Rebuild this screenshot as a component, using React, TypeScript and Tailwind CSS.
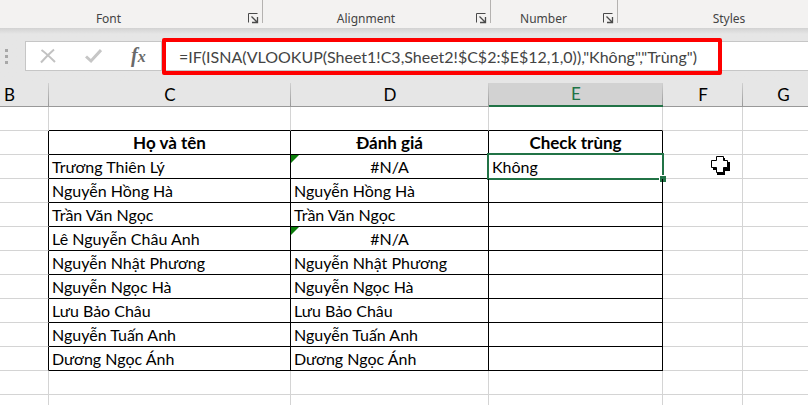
import React from "react";
import { clsx } from "clsx";

interface RibbonGroupProps {
  label: string;
  className: string;
  launcher?: boolean;
}

const RibbonGroup: React.FC<RibbonGroupProps> = ({ label, className, launcher = true }) => (
  <div className={clsx("flex h-7 shrink-0 items-start", className)}>
    <span className="flex-1 pt-[9px] text-center text-xs leading-5 text-[#444444]">{label}</span>
    {launcher && (
      <>
        <button type="button" aria-label={`${label} settings`} className="w-[21px] pt-[13px] pl-[7px]">
          <svg width="11" height="11" viewBox="0 0 11 11" fill="none" stroke="#4a4a4a">
            <path d="M0.5 9.500V0.5H9.5" />
            <path d="M3.5 3.5L9 9M9.5 4V9.5H4" strokeWidth="1.3" />
          </svg>
        </button>
        <span className="h-[23px] w-px bg-[#b4b2b0]" />
      </>
    )}
  </div>
);

const Ribbon = () => (
  <div className="flex h-7 overflow-hidden bg-[#f3f2f1] font-['Noto_Sans',sans-serif]">
    <RibbonGroup label="Font" className="-ml-6 w-[287px]" />
    <RibbonGroup label="Alignment" className="w-[228px]" />
    <RibbonGroup label="Number" className="w-[127px]" />
    <RibbonGroup label="Styles" className="w-[222px]" launcher={false} />
  </div>
);

const FormulaBar = () => (
  <div className="flex h-[55px] items-start bg-linear-to-b from-[#d2d2d2] to-[#e6e6e6] to-[6px] pt-[13px]">
    <div className="flex h-[30px] w-[25px] flex-col justify-center gap-[3px] pl-[5px]">
      <span className="size-[3px] bg-[#a8a8a8]" />
      <span className="size-[3px] bg-[#a8a8a8]" />
      <span className="size-[3px] bg-[#a8a8a8]" />
    </div>
    <div className="flex h-[30px] w-[137px] items-center border border-[#c6c6c6] bg-white pl-[14px]">
      <button type="button" aria-label="Cancel" className="w-[45px]">
        <svg width="16" height="16" viewBox="0 0 16 16" fill="none" stroke="#c2c2c2" strokeWidth="2">
          <path d="M1.5 2C5 4.5 10.5 9.500 15 14" />
          <path d="M14 1.500C10 5 5.500 9.500 1 14.500" />
        </svg>
      </button>
      <button type="button" aria-label="Enter" className="w-[45px]">
        <svg width="17" height="16" viewBox="0 0 17 16" fill="none" stroke="#c6c6c6" strokeWidth="3">
          <path d="M1 8.500L6 13L16 2" />
        </svg>
      </button>
      <button
        type="button"
        aria-label="Insert function"
        className="flex items-baseline pl-px font-['Liberation_Serif',serif] leading-6 font-bold text-[#6a6a6a] italic"
      >
        <span className="text-[20px]">f</span>
        <span className="text-[16px]">x</span>
      </button>
    </div>
    <div className="relative h-[30px] flex-1">
      <input
        type="text"
        aria-label="Formula bar"
        defaultValue={'=IF(ISNA(VLOOKUP(Sheet1!C3,Sheet2!$C$2:$E$12,1,0)),"Không","Trùng")'}
        className="h-full w-full border-y border-[#c6c6c6] bg-white pl-[17px] text-[16px] text-[#444444] outline-none"
      />
      <div className="pointer-events-none absolute -top-[3px] left-0 h-[37px] w-[560px] rounded-xs border-4 border-[#fe0000]" />
    </div>
  </div>
);

const columns = [
  { name: "B", width: "w-[49px]" },
  { name: "C", width: "w-[242px]" },
  { name: "D", width: "w-[198px]" },
  { name: "E", width: "w-[174px]" },
  { name: "F", width: "w-[80px]" },
  { name: "G", width: "w-auto" },
];

const people = [
  { name: "Trương Thiên Lý", rating: "#N/A", check: "Không" },
  { name: "Nguyễn Hồng Hà", rating: "Nguyễn Hồng Hà" },
  { name: "Trần Văn Ngọc", rating: "Trần Văn Ngọc" },
  { name: "Lê Nguyễn Châu Anh", rating: "#N/A" },
  { name: "Nguyễn Nhật Phương", rating: "Nguyễn Nhật Phương" },
  { name: "Nguyễn Ngọc Hà", rating: "Nguyễn Ngọc Hà" },
  { name: "Lưu Bảo Châu", rating: "Lưu Bảo Châu" },
  { name: "Nguyễn Tuấn Anh", rating: "Nguyễn Tuấn Anh" },
  { name: "Dương Ngọc Ánh", rating: "Dương Ngọc Ánh" },
];

const light = "border-r border-b border-[#d4d4d4] last:border-r-0";
const dark = "border-r border-b border-black pt-px pb-0 pr-0 leading-[22px] whitespace-nowrap";
const heading = "pl-0 text-[17px]";
// column B sits left of the bordered range, so only its right edge is black
const edge = "border-r border-b border-r-black border-b-[#d4d4d4]";

const BlankRow = ({ aboveTable = false }: { aboveTable?: boolean }) => (
  <tr className="h-6">
    {columns.map((col) => (
      <td
        key={col.name}
        className={clsx(
          "border-r border-b border-r-[#d4d4d4] last:border-r-0",
          aboveTable && "CDE".includes(col.name) ? "border-b-black" : "border-b-[#d4d4d4]",
        )}
      />
    ))}
  </tr>
);

const ErrorFlag = () => (
  <svg className="absolute top-0 left-0" width="8" height="8" viewBox="0 0 8 8">
    <path d="M0 0H8L0 8Z" fill="#0b7d0b" />
  </svg>
);

const Selection = () => (
  <div className="pointer-events-none absolute -inset-[2px] border-2 border-[#217346]">
    <span className="absolute -right-[4px] -bottom-[4px] size-[7px] border-t border-l border-white bg-[#217346]" />
  </div>
);

const Sheet = () => (
  <table className="w-full table-fixed border-separate border-spacing-0 text-[16px] text-black">
    <thead>
      <tr className="h-6">
        {columns.map((col) => {
          const active = col.name === "E";
          return (
            <th
              key={col.name}
              scope="col"
              className={clsx(
                "relative py-0 text-[17px] font-normal",
                col.width,
                active
                  ? "border-b-2 border-[#217346] bg-[#d2d2d2] leading-[22px] text-[#217346]"
                  : "border-b border-[#999999] bg-[#e6e6e6] leading-[23px]",
                col.name === "B" && "pr-[30px] pl-0",
                col.name === "G" && "pr-0 pl-4",
                col.name !== "B" && col.name !== "G" && "px-0",
              )}
            >
              {col.name}
              {col.name !== "G" && (
                <span className="absolute top-0 right-0 h-full w-px bg-linear-to-b from-[#d0d0d0] to-[#999999]" />
              )}
            </th>
          );
        })}
      </tr>
    </thead>
    <tbody>
      <BlankRow aboveTable />
      <tr className="h-6">
        <td className={edge} />
        <th scope="col" className={clsx(heading, dark)}>Họ và tên</th>
        <th scope="col" className={clsx(heading, dark)}>Đánh giá</th>
        <th scope="col" className={clsx(heading, dark)}>Check trùng</th>
        <td className={light} />
        <td className={light} />
      </tr>
      {people.map((person) => (
        <tr key={person.name} className="h-6">
          <td className={edge} />
          <td className={clsx("pl-[3px]", dark)}>{person.name}</td>
          <td className={clsx("relative", dark, person.rating === "#N/A" ? "pl-0 text-center" : "pl-[3px]")}>
            {person.rating === "#N/A" && <ErrorFlag />}
            {person.rating}
          </td>
          <td className={clsx("relative pl-[3px]", dark)}>
            {person.check}
            {person.check && <Selection />}
          </td>
          <td className={light} />
          <td className={light} />
        </tr>
      ))}
      <BlankRow />
      <BlankRow />
    </tbody>
  </table>
);

// Excel's block cross pointer
const CellCursor = () => (
  <svg className="pointer-events-none absolute top-[156px] left-[711px]" width="20" height="20" viewBox="0 0 20 20">
    <path d="M7 2H14V6H19V15H14V19H6V14H2V7H7Z" fill="#000000" />
    <path d="M5.500 0.500H12.500V4.500H16.500V11.500H12.500V16.500H5.500V11.500H0.500V4.500H5.500Z" fill="#ffffff" stroke="#000000" />
  </svg>
);

export default function App() {
  return (
    <div className="relative h-screen overflow-hidden bg-white font-[Lato,'Noto_Sans',sans-serif]">
      <Ribbon />
      <FormulaBar />
      <Sheet />
      <CellCursor />
    </div>
  );
}
